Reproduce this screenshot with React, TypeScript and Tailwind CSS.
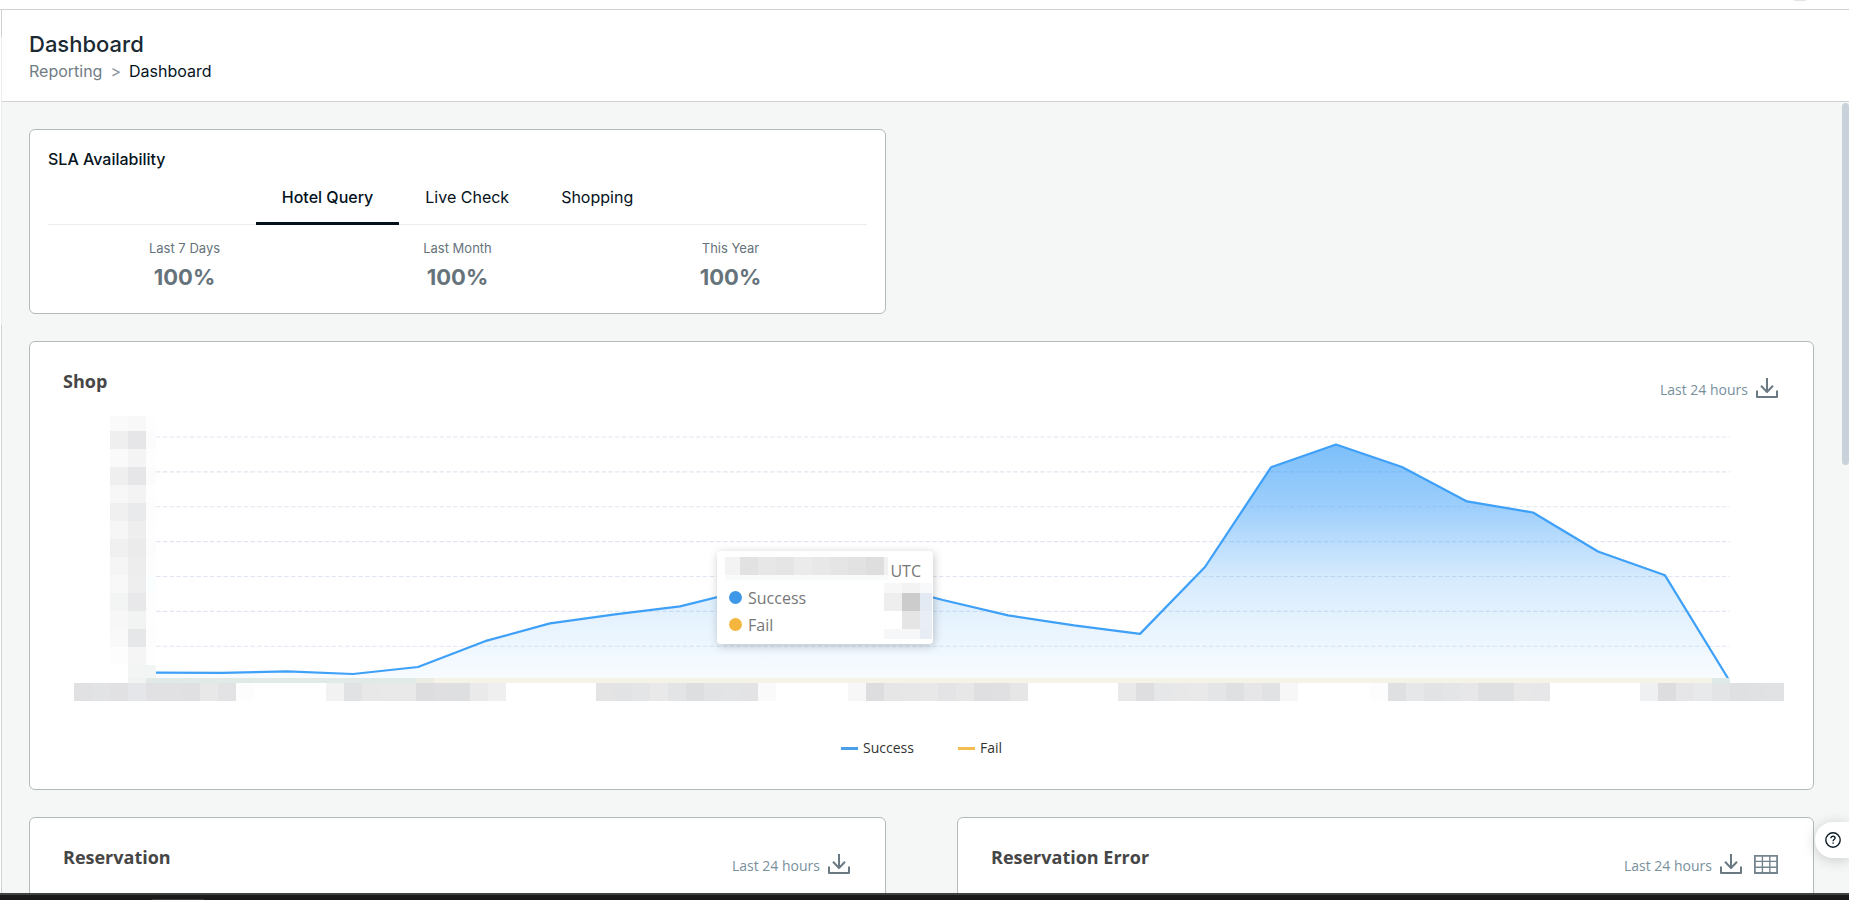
import { useState } from 'react';
import type { ReactNode } from 'react';

const SLA_TABS = ['Hotel Query', 'Live Check', 'Shopping'];

const SLA_VALUES = [
  { label: 'Last 7 Days', value: '100%' },
  { label: 'Last Month', value: '100%' },
  { label: 'This Year', value: '100%' },
];

const GRID_LINES = [437, 471.9, 506.7, 541.6, 576.5, 611.4, 646.3];

const SUCCESS_POINTS = [
  [156, 672.6], [222, 672.8], [287, 671.4], [353, 674], [418, 667], [485, 641.2],
  [550, 623.4], [615, 614.3], [680, 606.3], [746, 590], [812, 580], [877, 583],
  [943, 600], [1008, 615.4], [1074, 625.4], [1140, 633.9], [1205, 567], [1271, 467.3],
  [1336, 444.5], [1402, 467], [1467, 501.4], [1533, 512.5], [1598, 551.5], [1665, 575.3],
  [1729, 680],
];

const LINE_PATH = 'M' + SUCCESS_POINTS.map((p) => p.join(',')).join('L');
const AREA_PATH = `${LINE_PATH}L1729,681L156,681Z`;

// Masked y axis labels, [left cell, right cell, edge cell]
const Y_MASK = [
  { y: 416, h: 15, c: ['#fafafa', '#f8f8f8', '#fefefe'] },
  { y: 431, h: 18, c: ['#efefef', '#e6e6e8', '#fcfcfc'] },
  { y: 449, h: 18, c: ['#fafafa', '#f4f4f4', '#fefefe'] },
  { y: 467, h: 18, c: ['#efefef', '#e6e6e8', '#fcfcfc'] },
  { y: 485, h: 18, c: ['#f7f7f7', '#f3f3f3', '#fefefe'] },
  { y: 503, h: 18, c: ['#f0f0f0', '#e9eaec', '#fdfdfd'] },
  { y: 521, h: 18, c: ['#f6f6f6', '#eeeeee', '#fefefe'] },
  { y: 539, h: 18, c: ['#f0f0f0', '#ebebeb', '#fcfcfc'] },
  { y: 557, h: 18, c: ['#f5f5f5', '#ededed', '#fdfdfd'] },
  { y: 575, h: 18, c: ['#f8f8f8', '#eeeeee', '#fbfefe'] },
  { y: 593, h: 18, c: ['#f3f5f4', '#e8e8ea', '#fdfdfd'] },
  { y: 611, h: 18, c: ['#f7f7f7', '#f1f4f3', '#fefefe'] },
  { y: 629, h: 18, c: ['#f9f9f9', '#e6e7e9', '#fdfdfd'] },
  { y: 647, h: 18, c: ['#fdfdfd', '#f5f5f5', '#fefefe'] },
  { y: 665, h: 18, c: ['#ffffff', '#f3f5f4', '#f1f5f4'] },
];

// Masked x axis labels
const X_MASK = [
  { x: 74, c: ['#e1e1e3', '#e2e3e5', '#e1e1e3', '#e4e6e9', '#e1e1e3', '#e1e1e3', '#e0e0e2', '#e8e8e8', '#e3e3e5', '#fdfdfd'] },
  { x: 326, c: ['#f2f2f2', '#e1e2e4', '#e8e8e8', '#e9e9e9', '#e9e9e9', '#dddde0', '#dfdfe1', '#dedfe1', '#eaeaea', '#efefef'] },
  { x: 596, c: ['#e4e4e4', '#e2e3e5', '#e4e5e7', '#e9e9e9', '#e2e4e6', '#dddee0', '#e2e3e5', '#e3e4e6', '#e3e3e5', '#fafafa'] },
  { x: 848, c: ['#f7f7f7', '#dddde0', '#e6e6e6', '#e7e7e7', '#e8e8e8', '#e4e4e7', '#e7e7e7', '#dfdfe1', '#e0e0e2', '#e6e6e6'] },
  { x: 1118, c: ['#e9e9e9', '#dedee1', '#e6e7e9', '#e8e8e8', '#e9e9e9', '#e4e5e7', '#dfe0e2', '#e6e6e8', '#e1e2e4', '#f7f7f7'] },
  { x: 1370, c: ['#fdfdfd', '#dfe0e1', '#e6e7e9', '#e2e3e4', '#e4e5e7', '#e7e7e9', '#dfe0e2', '#dfe0e2', '#e8e8e8', '#e7e7e9'] },
  { x: 1640, c: ['#eef0f2', '#dddde0', '#e6e6e8', '#e8e9eb', '#e3e4e6', '#dee0e1', '#e0e1e3', '#e1e2e4'] },
];

const TOOLTIP_DATE_MASK = [
  { w: 15, color: '#f3f3f3' },
  { w: 18, color: '#e2e2e2' },
  { w: 18, color: '#e7e7e7' },
  { w: 18, color: '#e5e5e5' },
  { w: 18, color: '#ebebeb' },
  { w: 18, color: '#e8e8e8' },
  { w: 18, color: '#e5e5e5' },
  { w: 18, color: '#e2e2e2' },
  { w: 18, color: '#dedede' },
  { w: 4, color: '#f1f1f1' },
];

const TOOLTIP_VALUE_MASK = [
  { h: 10, c: ['#f7f7f8', '#f3f3f4', '#f8f9fb'] },
  { h: 18, c: ['#eeeeee', '#cccccc', '#e3eaf4'] },
  { h: 18, c: ['#ffffff', '#e5e5e5', '#e9edf5'] },
  { h: 10, c: ['#f6f7f9', '#f6f7f9', '#e8ecf4'] },
];

function DownloadIcon() {
  return (
    <svg width="22" height="20" viewBox="0 0 22 20" fill="none" stroke="#6b7a82" strokeWidth="2" strokeLinejoin="round">
      <path d="M11 0V14M5 7.8L11 14L17 7.8M1 12.6V19H21V12.6" />
    </svg>
  );
}

function TableIcon() {
  return (
    <svg width="24" height="20" viewBox="0 0 24 20" fill="none" stroke="#74858f">
      <path strokeWidth="1.8" d="M0.9 1.9H23.1V19H0.9Z" />
      <path strokeWidth="1.4" d="M0.9 7.4H23.1M0.9 13.2H23.1M8.4 1.9V19M15.8 1.9V19" />
    </svg>
  );
}

function ChartHeader({ title, children }: { title: string; children?: ReactNode }) {
  return (
    <div className="flex h-[58px] items-start justify-between pl-[33px] pr-[35px] font-['Open_Sans',sans-serif]">
      <h2 className="pt-[27px] text-lg leading-6 font-bold text-[#464646]">{title}</h2>
      <div className="flex items-start pt-9">
        <span className="mr-2 pt-0.5 text-sm leading-5 text-[#78909c]">Last 24 hours</span>
        <button type="button" aria-label={`Download ${title}`}>
          <DownloadIcon />
        </button>
        {children}
      </div>
    </div>
  );
}

function SlaCard() {
  const [active, setActive] = useState(SLA_TABS[0]);

  return (
    <section className="rounded-md border border-[#b4baba] bg-white px-[18px] pt-[17px] pb-5">
      <h2 className="text-base leading-6 font-medium text-[#06141d]">SLA Availability</h2>
      <div role="tablist" className="flex justify-center border-b border-[#ededed]">
        {SLA_TABS.map((tab) => (
          <button
            key={tab}
            type="button"
            role="tab"
            aria-selected={tab === active}
            onClick={() => setActive(tab)}
            className={
              tab === active
                ? '-mb-px h-[54px] border-b-3 border-[#04121c] px-[26px] text-base font-medium text-[#04121c]'
                : '-mb-px h-[54px] border-b-3 border-transparent px-[26px] text-base text-[#04121c]'
            }
          >
            {tab}
          </button>
        ))}
      </div>
      <dl className="grid grid-cols-3 pt-[11px] text-center text-[#66737b]">
        {SLA_VALUES.map((item) => (
          <div key={item.label}>
            <dt className="text-[13px] leading-6">{item.label}</dt>
            <dd className="pt-px text-[22px] leading-8 font-bold">{item.value}</dd>
          </div>
        ))}
      </dl>
    </section>
  );
}

function ChartTooltip() {
  return (
    <div className="absolute top-[151px] left-[687px] h-[93px] w-[216px] rounded-sm bg-white font-['Open_Sans',sans-serif] text-base text-[#777] shadow-[1px_2px_10px_rgba(0,0,0,0.22)]">
      <div className="flex h-8 items-start justify-between pt-[6px] pr-3 pl-2">
        <div className="flex">
          {TOOLTIP_DATE_MASK.map((cell, i) => (
            <span
              key={i}
              className="h-[23px] border-b-5 border-[#f9fafa]"
              style={{ width: cell.w, backgroundColor: cell.color }}
            />
          ))}
        </div>
        <span className="leading-7">UTC</span>
      </div>
      <div className="flex justify-between pr-px">
        <ul className="pl-3">
          <li className="flex h-[27px] items-center gap-[6px] pt-0.5">
            <span className="size-[13px] rounded-full bg-[#3f97e8]" />
            Success
          </li>
          <li className="flex h-[27px] items-center gap-[6px] pt-0.5">
            <span className="size-[13px] rounded-full bg-[#f4b63f]" />
            Fail
          </li>
        </ul>
        <div>
          {TOOLTIP_VALUE_MASK.map((row, i) => (
            <div key={i} className="flex" style={{ height: row.h }}>
              <span className="w-[18px]" style={{ backgroundColor: row.c[0] }} />
              <span className="w-[18px]" style={{ backgroundColor: row.c[1] }} />
              <span className="w-3" style={{ backgroundColor: row.c[2] }} />
            </div>
          ))}
        </div>
      </div>
    </div>
  );
}

function ShopChart() {
  return (
    <svg className="block w-full" viewBox="30 400 1783 310" role="img" aria-label="Shop requests">
      <defs>
        <linearGradient id="successFill" gradientUnits="userSpaceOnUse" x1="0" y1="444" x2="0" y2="681">
          <stop offset="0" stopColor="#3fa0f8" stopOpacity="0.68" />
          <stop offset="0.28" stopColor="#3fa0f8" stopOpacity="0.5" />
          <stop offset="0.41" stopColor="#3fa0f8" stopOpacity="0.36" />
          <stop offset="0.56" stopColor="#3fa0f8" stopOpacity="0.22" />
          <stop offset="0.7" stopColor="#3fa0f8" stopOpacity="0.15" />
          <stop offset="0.85" stopColor="#3fa0f8" stopOpacity="0.09" />
          <stop offset="1" stopColor="#3fa0f8" stopOpacity="0.03" />
        </linearGradient>
      </defs>
      {GRID_LINES.map((y) => (
        <path key={y} d={`M156,${y}H1730`} stroke="#e0e6f1" strokeWidth="1.125" strokeDasharray="4.5 2.25" />
      ))}
      <path d={AREA_PATH} fill="url(#successFill)" />
      <path d={LINE_PATH} fill="none" stroke="#3fa0f8" strokeWidth="2.25" strokeLinejoin="bevel" />
      <g shapeRendering="crispEdges">
        {Y_MASK.map((row) => (
          <g key={row.y}>
            <rect x="110" y={row.y} width="18" height={row.h} fill={row.c[0]} />
            <rect x="128" y={row.y} width="18" height={row.h} fill={row.c[1]} />
            <rect x="146" y={row.y} width="10" height={row.h} fill={row.c[2]} />
          </g>
        ))}
        <rect x="128" y="678" width="18" height="5" fill="#eff3f1" />
        <rect x="146" y="678" width="270" height="5" fill="#e2eae7" />
        <rect x="416" y="678" width="18" height="5" fill="#ebede4" />
        <rect x="434" y="678" width="1278" height="5" fill="#f5f3e8" />
        <rect x="1712" y="678" width="18" height="5" fill="#dfe9e5" />
        {X_MASK.map((group) =>
          group.c.map((color, i) => (
            <rect key={group.x + i * 18} x={group.x + i * 18} y="683" width="18" height="18" fill={color} />
          ))
        )}
      </g>
    </svg>
  );
}

function ShopCard() {
  return (
    <section className="rounded-md border border-[#b4baba] bg-white">
      <ChartHeader title="Shop" />
      <div className="relative">
        <ShopChart />
        <ChartTooltip />
      </div>
      <ul className="flex justify-center gap-11 pt-7 pb-[31px] font-['Open_Sans',sans-serif] text-sm leading-5 text-[#333]">
        <li className="flex items-center gap-[5px]">
          <span className="h-[3px] w-[17px] bg-[#4a9fe8]" />
          Success
        </li>
        <li className="flex items-center gap-[5px]">
          <span className="h-[3px] w-[17px] bg-[#f4bd50]" />
          Fail
        </li>
      </ul>
    </section>
  );
}

export default function App() {
  return (
    <div className="flex h-screen flex-col overflow-hidden bg-white font-['Inter',sans-serif]">
      <div className="flex h-[10px] shrink-0 items-start justify-end border-b border-[#cfd1d2] pr-[43px]">
        <span className="h-px w-3 bg-[#e4e4e4]" />
      </div>

      <div className="flex min-h-0 flex-1">
        {/* Sidebar edge */}
        <div className="flex w-[2px] shrink-0 flex-col pl-px">
          <span className="h-[27px] bg-[#cfd1d2]" />
          <span className="h-72 bg-[#ececec]" />
          <span className="flex-1 bg-[#cfd1d2]" />
        </div>

        <div className="flex min-w-0 flex-1 flex-col">
          <header className="h-[92px] shrink-0 border-b border-[#cfd1d2] pt-5 pl-[27px]">
            <h1 className="text-[22px] leading-7 font-medium text-[#1b2a33]">Dashboard</h1>
            <nav aria-label="Breadcrumb" className="flex gap-2 pt-px text-base leading-6">
              <a href="#reporting" className="text-[#717d84]">Reporting</a>
              <span className="text-[#8b959b]">&gt;</span>
              <a href="#dashboard" className="text-[#06141d]">Dashboard</a>
            </nav>
          </header>

          <div className="flex min-h-0 flex-1 bg-[#f5f7f6]">
            <main className="min-w-0 flex-1 overflow-hidden pt-[27px] pr-7 pl-[27px]">
              <div className="flex flex-col gap-[27px]">
                <div className="grid grid-cols-2 gap-x-[71px]">
                  <SlaCard />
                </div>
                <ShopCard />
                <div className="grid grid-cols-2 gap-x-[71px]">
                  <section className="rounded-md border border-[#b4baba] bg-white pb-96">
                    <ChartHeader title="Reservation" />
                  </section>
                  <section className="rounded-md border border-[#b4baba] bg-white pb-96">
                    <ChartHeader title="Reservation Error">
                      <button type="button" aria-label="Show table" className="ml-3">
                        <TableIcon />
                      </button>
                    </ChartHeader>
                  </section>
                </div>
              </div>
            </main>
            <div className="w-[7px] shrink-0 pt-px">
              <div className="h-[362px] rounded-full bg-[#c9d1da]" />
            </div>
          </div>
        </div>
      </div>

      <div className="flex h-[7px] shrink-0 items-end border-t-2 border-[#3e4341] bg-[#1a1a1a] pl-[152px]">
        <span className="h-px w-[52px] bg-[#3a3a3a]" />
      </div>

      <button
        type="button"
        aria-label="Help"
        className="fixed right-0 bottom-[42px] flex h-9 w-[34px] items-center rounded-l-full bg-white pl-[10px] shadow-[0_2px_14px_rgba(0,0,0,0.18)]"
      >
        <svg width="16" height="16" viewBox="0 0 16 16" fill="none" stroke="#0c1d28" strokeWidth="1.4">
          <circle cx="8" cy="8" r="7.2" />
          <path d="M5.9 6.3C5.9 5 6.8 4.2 8 4.2C9.2 4.2 10.1 5 10.1 6.1C10.1 7.5 8.1 7.6 8.1 9.2" />
          <path d="M8.1 10.4V11.8" />
        </svg>
      </button>
    </div>
  );
}
